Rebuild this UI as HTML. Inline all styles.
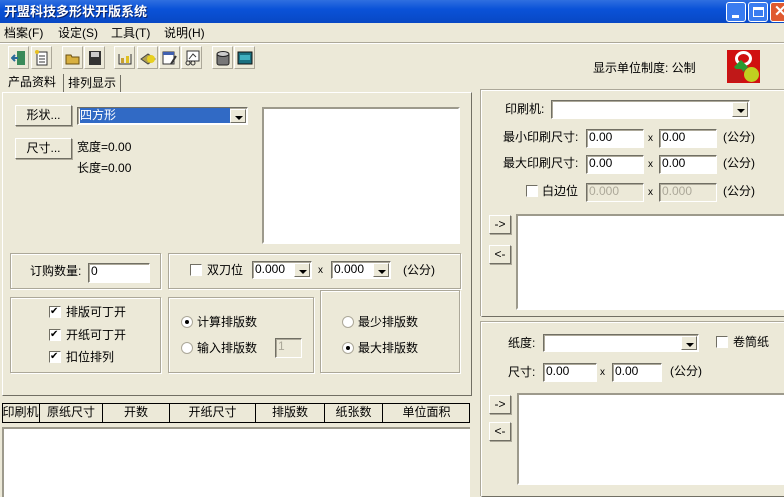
<!DOCTYPE html>
<html><head><meta charset="utf-8">
<style>
*{box-sizing:border-box;margin:0;padding:0}
body{width:784px;height:493px;overflow:hidden;background:#ece9d8;font-family:"Liberation Sans","Noto Sans CJK SC","WenQuanYi Zen Hei",sans-serif;font-size:12px;color:#000;position:relative}
.a{position:absolute}
.t{position:absolute;white-space:nowrap;line-height:14px}
.title{left:0;top:0;width:784px;height:23px;background:linear-gradient(#2f6fe0,#0a52d8 40%,#0848c4);}
.grp{position:absolute;border:1px solid #aca899;box-shadow:inset 1px 1px 0 #fff,1px 1px 0 #fff}
.btn{position:absolute;background:#ece9d8;border:1px solid;border-color:#fff #716f64 #716f64 #fff;box-shadow:1px 1px 0 #aca899;text-align:center;line-height:18px}
.in{position:absolute;background:#fff;border:1px solid;border-color:#716f64 #fff #fff #716f64;box-shadow:inset 1px 1px 0 #aca899;padding-left:2px;line-height:15px}
.dis{background:#ece9d8;color:#aca899}
.dd{position:absolute;right:1px;top:1px;bottom:1px;width:16px;background:#ece9d8;border:1px solid;border-color:#fff #716f64 #716f64 #fff}
.dd:after{content:"";position:absolute;left:4px;top:6px;border:4px solid transparent;border-top:4px solid #000;border-bottom:0}
.cb{position:absolute;width:12px;height:12px;background:#fff;border:1px solid;border-color:#716f64 #fff #fff #716f64}
.rb{position:absolute;width:12px;height:12px;border-radius:50%;background:#fff;border:1px solid #aca899}
.ico{position:absolute;top:46px;width:21px;height:23px;border:1px solid;border-color:#fff #aca899 #aca899 #fff}
.ico svg{position:absolute;left:2px;top:3px}
</style></head><body>
<div class="a title"></div>
<div class="t" style="left:4px;top:5px;color:#fff;font-weight:bold;font-size:13px;text-shadow:1px 1px #0a246a">开盟科技多形状开版系统</div>
<div class="a" style="left:726px;top:2px;width:20px;height:20px;border:1px solid #fff;border-radius:3px;background:#3a7cf0"><div class="a" style="left:5px;top:12px;width:7px;height:3px;background:#fff"></div></div>
<div class="a" style="left:748px;top:2px;width:20px;height:20px;border:1px solid #fff;border-radius:3px;background:#3a7cf0"><div class="a" style="left:4px;top:4px;width:11px;height:10px;border:1px solid #fff;border-top-width:3px"></div></div>
<div class="a" style="left:770px;top:2px;width:20px;height:20px;border:1px solid #fff;border-radius:3px;background:#e05a30;color:#fff;font-weight:bold;font-size:15px;line-height:18px;padding-left:3px">✕</div>

<div class="t" style="left:4px;top:26px">档案(F)</div>
<div class="t" style="left:58px;top:26px">设定(S)</div>
<div class="t" style="left:111px;top:26px">工具(T)</div>
<div class="t" style="left:164px;top:26px">说明(H)</div>
<div class="a" style="left:0;top:42px;width:784px;height:1px;background:#aca899"></div>
<div class="a" style="left:0;top:43px;width:784px;height:1px;background:#fff"></div>

<div class="ico" style="left:8px"><svg width="16" height="16"><rect x="6" y="1" width="8" height="14" fill="#3a8a5a"/><path d="M1 8h6M4 5l-3 3 3 3" stroke="#2a6a9a" stroke-width="2" fill="none"/></svg></div>
<div class="ico" style="left:31px"><svg width="16" height="16"><rect x="3" y="2" width="10" height="13" fill="#fff" stroke="#333"/><path d="M5 6h6M5 9h6M5 12h6" stroke="#333"/><circle cx="3" cy="2" r="2" fill="#e8c020"/></svg></div>
<div class="ico" style="left:62px"><svg width="16" height="16"><path d="M1 5h5l1 2h7v7H1z" fill="#d8b040" stroke="#6a5010"/></svg></div>
<div class="ico" style="left:84px"><svg width="16" height="16"><rect x="2" y="1" width="12" height="14" fill="#333"/><rect x="4" y="2" width="8" height="5" fill="#ccc"/></svg></div>
<div class="ico" style="left:114px"><svg width="16" height="16"><path d="M2 4v10h12V4" stroke="#333" fill="none"/><rect x="4" y="8" width="3" height="5" fill="#c8a030"/><rect x="9" y="6" width="3" height="7" fill="#e0c020"/></svg></div>
<div class="ico" style="left:137px"><svg width="16" height="16"><path d="M1 9l7-5 7 5-7 5z" fill="#b0a050" stroke="#444"/><circle cx="11" cy="9" r="4" fill="#e8d020"/></svg></div>
<div class="ico" style="left:159px"><svg width="16" height="16"><rect x="1" y="2" width="11" height="12" fill="#fff" stroke="#333"/><rect x="1" y="2" width="11" height="3" fill="#4060b0"/><path d="M9 14l5-8" stroke="#333" stroke-width="2"/></svg></div>
<div class="ico" style="left:181px"><svg width="16" height="16"><rect x="3" y="1" width="12" height="10" fill="#fff" stroke="#333"/><path d="M5 9l4-5 3 3" stroke="#333" fill="none"/><circle cx="4" cy="13" r="2" fill="none" stroke="#333"/><circle cx="9" cy="13" r="2" fill="none" stroke="#333"/></svg></div>
<div class="ico" style="left:212px"><svg width="16" height="16"><rect x="2" y="3" width="12" height="12" rx="2" fill="#777" stroke="#222"/><ellipse cx="8" cy="4" rx="6" ry="2.5" fill="#ccc" stroke="#222"/></svg></div>
<div class="ico" style="left:234px"><svg width="16" height="16"><rect x="1" y="2" width="14" height="12" fill="#1a7080" stroke="#111"/><rect x="3" y="5" width="10" height="5" fill="#40b0c0"/></svg></div>

<div class="t" style="left:593px;top:61px">显示单位制度: 公制</div>
<div class="a" style="left:727px;top:50px;width:33px;height:33px;background:#d01010"><div class="a" style="left:8px;top:1px;width:17px;height:15px;border:3px solid #fff;border-radius:50%"></div><div class="a" style="left:9px;top:12px;width:10px;height:10px;background:#2a9a30;transform:rotate(45deg)"></div><div class="a" style="left:17px;top:17px;width:15px;height:15px;border-radius:50%;background:#c0d020"></div><div class="a" style="left:1px;top:19px;width:15px;height:13px;background:#c01818;border-radius:3px"></div></div>

<!-- tabs -->
<div class="t" style="left:8px;top:75px">产品资料</div>
<div class="a" style="left:63px;top:74px;width:1px;height:18px;background:#716f64"></div>
<div class="t" style="left:68px;top:76px">排列显示</div>
<div class="a" style="left:120px;top:75px;width:1px;height:17px;background:#716f64"></div>
<div class="a" style="left:2px;top:92px;width:470px;height:304px;border:1px solid;border-color:#fff #716f64 #716f64 #fff"></div>

<div class="btn" style="left:15px;top:105px;width:57px;height:21px">形状...</div>
<div class="in" style="left:77px;top:107px;width:171px;height:18px"><span style="background:#316ac5;color:#fff;display:block;width:150px">四方形</span><div class="dd"></div></div>
<div class="a" style="left:262px;top:107px;width:198px;height:137px;background:#fff;border:2px solid;border-color:#9d9a8c #fff #fff #9d9a8c"></div>
<div class="btn" style="left:15px;top:138px;width:57px;height:21px">尺寸...</div>
<div class="t" style="left:77px;top:140px">宽度=0.00</div>
<div class="t" style="left:77px;top:161px">长度=0.00</div>

<div class="grp" style="left:10px;top:253px;width:151px;height:36px"></div>
<div class="t" style="left:30px;top:264px">订购数量:</div>
<div class="in" style="left:88px;top:263px;width:62px;height:20px">0</div>
<div class="grp" style="left:168px;top:253px;width:293px;height:36px"></div>
<div class="cb" style="left:190px;top:264px"></div>
<div class="t" style="left:207px;top:263px">双刀位</div>
<div class="in" style="left:252px;top:261px;width:60px;height:18px">0.000<div class="dd"></div></div>
<div class="t" style="left:318px;top:264px;font-size:10px">x</div>
<div class="in" style="left:331px;top:261px;width:60px;height:18px">0.000<div class="dd"></div></div>
<div class="t" style="left:403px;top:263px">(公分)</div>

<div class="grp" style="left:10px;top:297px;width:151px;height:76px"></div>
<div class="cb" style="left:49px;top:306px;font-size:10px;line-height:10px">✔</div><div class="t" style="left:66px;top:305px">排版可丁开</div>
<div class="cb" style="left:49px;top:329px;font-size:10px;line-height:10px">✔</div><div class="t" style="left:66px;top:328px">开纸可丁开</div>
<div class="cb" style="left:49px;top:351px;font-size:10px;line-height:10px">✔</div><div class="t" style="left:66px;top:350px">扣位排列</div>
<div class="grp" style="left:168px;top:297px;width:146px;height:76px"></div>
<div class="rb" style="left:181px;top:316px"><div class="a" style="left:3px;top:3px;width:4px;height:4px;border-radius:50%;background:#000"></div></div><div class="t" style="left:197px;top:315px">计算排版数</div>
<div class="rb" style="left:181px;top:342px"></div><div class="t" style="left:197px;top:341px">输入排版数</div>
<div class="in dis" style="left:275px;top:338px;width:27px;height:20px">1</div>
<div class="grp" style="left:320px;top:290px;width:140px;height:83px"></div>
<div class="rb" style="left:342px;top:316px"></div><div class="t" style="left:358px;top:315px">最少排版数</div>
<div class="rb" style="left:342px;top:342px"><div class="a" style="left:3px;top:3px;width:4px;height:4px;border-radius:50%;background:#000"></div></div><div class="t" style="left:358px;top:341px">最大排版数</div>

<!-- table -->
<div class="a" style="left:2px;top:403px;width:468px;height:20px;background:#ece9d8;border:1px solid #000"></div>
<div class="a" style="left:2px;top:403px;width:468px;height:20px;display:flex">
<div style="width:38px;border-right:1px solid #000;text-align:center;line-height:18px">印刷机</div>
<div style="width:63px;border-right:1px solid #000;text-align:center;line-height:18px">原纸尺寸</div>
<div style="width:67px;border-right:1px solid #000;text-align:center;line-height:18px">开数</div>
<div style="width:86px;border-right:1px solid #000;text-align:center;line-height:18px">开纸尺寸</div>
<div style="width:69px;border-right:1px solid #000;text-align:center;line-height:18px">排版数</div>
<div style="width:58px;border-right:1px solid #000;text-align:center;line-height:18px">纸张数</div>
<div style="flex:1;text-align:center;line-height:18px">单位面积</div>
</div>
<div class="a" style="left:2px;top:427px;width:468px;height:70px;background:#fff;border-top:2px solid #9d9a8c;border-left:2px solid #9d9a8c"></div>

<!-- right top -->
<div class="a" style="left:481px;top:90px;width:306px;height:227px;border:1px solid;border-color:#fff #716f64 #716f64 #fff;box-shadow:-1px -1px 0 #aca899"></div>
<div class="t" style="left:505px;top:102px">印刷机:</div>
<div class="in" style="left:551px;top:100px;width:199px;height:19px"><div class="dd"></div></div>
<div class="t" style="left:503px;top:130px">最小印刷尺寸:</div>
<div class="in" style="left:586px;top:129px;width:58px;height:19px">0.00</div>
<div class="t" style="left:648px;top:132px;font-size:10px">x</div>
<div class="in" style="left:659px;top:129px;width:58px;height:19px">0.00</div>
<div class="t" style="left:723px;top:130px">(公分)</div>
<div class="t" style="left:503px;top:156px">最大印刷尺寸:</div>
<div class="in" style="left:586px;top:155px;width:58px;height:19px">0.00</div>
<div class="t" style="left:648px;top:158px;font-size:10px">x</div>
<div class="in" style="left:659px;top:155px;width:58px;height:19px">0.00</div>
<div class="t" style="left:723px;top:156px">(公分)</div>
<div class="cb" style="left:526px;top:185px"></div><div class="t" style="left:542px;top:184px">白边位</div>
<div class="in dis" style="left:586px;top:183px;width:58px;height:19px">0.000</div>
<div class="t" style="left:648px;top:186px;font-size:10px">x</div>
<div class="in dis" style="left:659px;top:183px;width:58px;height:19px">0.000</div>
<div class="t" style="left:723px;top:184px">(公分)</div>
<div class="btn" style="left:489px;top:215px;width:22px;height:19px;line-height:16px">-&gt;</div>
<div class="btn" style="left:489px;top:245px;width:22px;height:19px;line-height:16px">&lt;-</div>
<div class="a" style="left:516px;top:214px;width:270px;height:96px;background:#fff;border:2px solid;border-color:#9d9a8c #fff #fff #9d9a8c"></div>

<!-- right bottom -->
<div class="a" style="left:481px;top:322px;width:306px;height:175px;border:1px solid;border-color:#fff #716f64 #716f64 #fff;box-shadow:-1px -1px 0 #aca899"></div>
<div class="t" style="left:508px;top:336px">纸度:</div>
<div class="in" style="left:543px;top:334px;width:156px;height:18px"><div class="dd"></div></div>
<div class="cb" style="left:716px;top:336px"></div><div class="t" style="left:733px;top:335px">卷筒纸</div>
<div class="t" style="left:508px;top:365px">尺寸:</div>
<div class="in" style="left:543px;top:363px;width:54px;height:19px">0.00</div>
<div class="t" style="left:600px;top:366px;font-size:10px">x</div>
<div class="in" style="left:612px;top:363px;width:50px;height:19px">0.00</div>
<div class="t" style="left:670px;top:364px">(公分)</div>
<div class="btn" style="left:489px;top:395px;width:22px;height:19px;line-height:16px">-&gt;</div>
<div class="btn" style="left:489px;top:422px;width:22px;height:19px;line-height:16px">&lt;-</div>
<div class="a" style="left:517px;top:393px;width:269px;height:92px;background:#fff;border:2px solid;border-color:#9d9a8c #fff #fff #9d9a8c"></div>
</body></html>
